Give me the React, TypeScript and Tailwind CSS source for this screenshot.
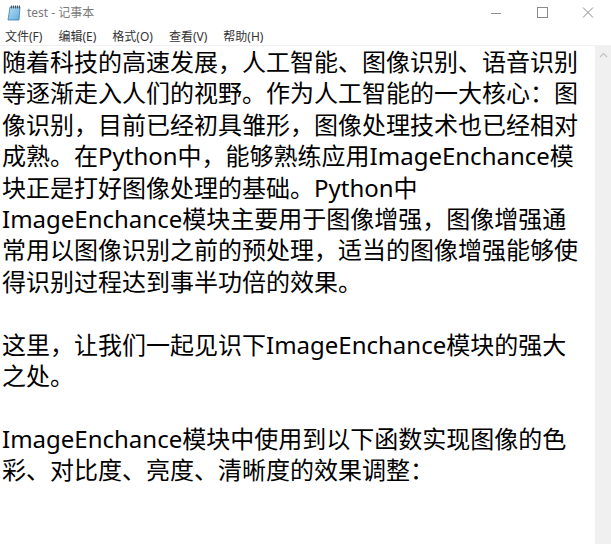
import React from "react";

const lines = [
  "随着科技的高速发展，人工智能、图像识别、语音识别",
  "等逐渐走入人们的视野。作为人工智能的一大核心：图",
  "像识别，目前已经初具雏形，图像处理技术也已经相对",
  "成熟。在Python中，能够熟练应用ImageEnchance模",
  "块正是打好图像处理的基础。Python中",
  "ImageEnchance模块主要用于图像增强，图像增强通",
  "常用以图像识别之前的预处理，适当的图像增强能够使",
  "得识别过程达到事半功倍的效果。",
  "",
  "这里，让我们一起见识下ImageEnchance模块的强大",
  "之处。",
  "",
  "ImageEnchance模块中使用到以下函数实现图像的色",
  "彩、对比度、亮度、清晰度的效果调整：",
];

function NotepadIcon() {
  return (
    <svg width="18" height="18" viewBox="0 0 18 18">
      <defs>
        <linearGradient id="pad" x1="0" y1="0" x2="1" y2="1">
          <stop offset="0" stopColor="#bfe3f7" />
          <stop offset="1" stopColor="#5aa8d8" />
        </linearGradient>
      </defs>
      <path d="M4 3 H14 L13 16 H2 Z" fill="url(#pad)" stroke="#3a7fb0" strokeWidth="0.8" />
      <path d="M4.5 6 L12.5 6 M4.2 8.5 L12.3 8.5 M4 11 L12 11 M3.8 13.5 L11.8 13.5" stroke="#8fc4e6" strokeWidth="0.6" />
      {[5, 7, 9, 11, 13].map((x) => (
        <rect key={x} x={x} y="1.5" width="1" height="3" fill="#555" />
      ))}
    </svg>
  );
}

export default function App() {
  return (
    <div
      className="w-[611px] h-[544px] bg-white flex flex-col overflow-hidden"
      style={{ fontFamily: '"Noto Sans", "Noto Sans CJK SC", sans-serif' }}
    >
      {/* title bar */}
      <div className="h-[26px] flex items-center shrink-0">
        <div className="w-[24px] pl-[6px] flex items-center">
          <NotepadIcon />
        </div>
        <div className="ml-[3px] text-[12px] text-[#7a7a7a] leading-none">test - 记事本</div>
        <div className="flex-1" />
        <div className="w-[46px] h-[26px] flex items-center justify-center">
          <svg width="12" height="12" viewBox="0 0 12 12">
            <path d="M1 6.5 H11" stroke="#8a8a8a" strokeWidth="1" />
          </svg>
        </div>
        <div className="w-[46px] h-[26px] flex items-center justify-center">
          <svg width="12" height="12" viewBox="0 0 12 12">
            <rect x="1.5" y="0.5" width="10" height="10" fill="none" stroke="#8a8a8a" strokeWidth="1" />
          </svg>
        </div>
        <div className="w-[46px] h-[26px] flex items-center justify-center">
          <svg width="12" height="12" viewBox="0 0 12 12">
            <path d="M1 0.5 L11 10.5 M11 0.5 L1 10.5" stroke="#8a8a8a" strokeWidth="1" />
          </svg>
        </div>
      </div>
      {/* menu bar */}
      <div className="h-[20px] pt-[2px] flex items-center text-[12px] text-[#333] border-b border-[#f0f0f0] shrink-0 pl-[5px] gap-[16px]">
        <span>文件(F)</span>
        <span>编辑(E)</span>
        <span>格式(O)</span>
        <span>查看(V)</span>
        <span>帮助(H)</span>
      </div>
      {/* edit area */}
      <div className="flex flex-1 min-h-0">
        <div className="flex-1 pl-[2px] text-[24px] leading-[31.4px] text-black">
          {lines.map((l, i) => (
            <div key={i} className="whitespace-nowrap h-[31.4px]">
              {l}
            </div>
          ))}
        </div>
        <div className="w-[16px] bg-[#f0f0f0] flex flex-col items-center">
          <div className="h-[17px] w-full flex items-center justify-center">
            <svg width="9" height="6" viewBox="0 0 9 6">
              <path d="M1 5 L4.5 1.5 L8 5" fill="none" stroke="#c2c2c2" strokeWidth="1.2" />
            </svg>
          </div>
        </div>
      </div>
    </div>
  );
}
